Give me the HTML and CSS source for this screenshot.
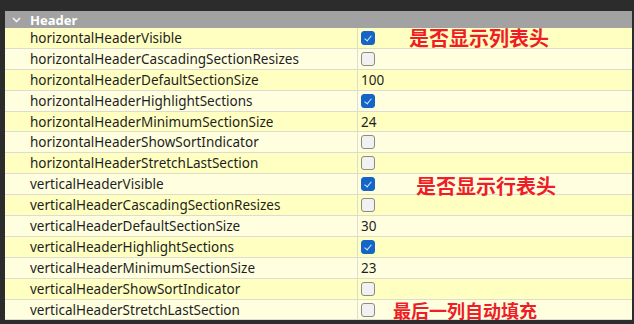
FILE: index.html
```html
<!DOCTYPE html>
<html>
<head>
<meta charset="utf-8">
<link rel="stylesheet" href="styles.css">
</head>
<body>
<div class="frame">
  <div class="editor">
    <div class="group">
      <span class="chev"><svg width="9" height="6" viewBox="0 0 9 6"><path d="M1 1 L4.5 4.5 L8 1" fill="none" stroke="#f2f2f2" stroke-width="1.6"/></svg></span>
      <span class="group-title">Header</span>
    </div>
    <div class="row odd"><div class="name">horizontalHeaderVisible</div><div class="val"><span class="cb on"></span><span class="note n1">是否显示列表头</span></div></div>
    <div class="row"><div class="name">horizontalHeaderCascadingSectionResizes</div><div class="val"><span class="cb"></span></div></div>
    <div class="row odd"><div class="name">horizontalHeaderDefaultSectionSize</div><div class="val">100</div></div>
    <div class="row"><div class="name">horizontalHeaderHighlightSections</div><div class="val"><span class="cb on"></span></div></div>
    <div class="row odd"><div class="name">horizontalHeaderMinimumSectionSize</div><div class="val">24</div></div>
    <div class="row"><div class="name">horizontalHeaderShowSortIndicator</div><div class="val"><span class="cb"></span></div></div>
    <div class="row odd"><div class="name">horizontalHeaderStretchLastSection</div><div class="val"><span class="cb"></span></div></div>
    <div class="row"><div class="name">verticalHeaderVisible</div><div class="val"><span class="cb on"></span><span class="note n2">是否显示行表头</span></div></div>
    <div class="row odd"><div class="name">verticalHeaderCascadingSectionResizes</div><div class="val"><span class="cb"></span></div></div>
    <div class="row"><div class="name">verticalHeaderDefaultSectionSize</div><div class="val">30</div></div>
    <div class="row odd"><div class="name">verticalHeaderHighlightSections</div><div class="val"><span class="cb on"></span></div></div>
    <div class="row"><div class="name">verticalHeaderMinimumSectionSize</div><div class="val">23</div></div>
    <div class="row odd"><div class="name">verticalHeaderShowSortIndicator</div><div class="val"><span class="cb"></span></div></div>
    <div class="row"><div class="name">verticalHeaderStretchLastSection</div><div class="val"><span class="cb"></span><span class="note n3">最后一列自动填充</span></div></div>
  </div>
</div>
</body>
</html>
```
FILE: styles.css
```css
html, body {
  margin: 0;
  padding: 0;
  background: #2c2c2c;
  width: 634px;
  height: 324px;
  overflow: hidden;
}
.frame {
  padding: 11px 2px 0 5px;
}
.editor {
  background: #fffff0;
  font-family: "Noto Sans", "Noto Sans CJK SC", sans-serif;
  font-size: 13.5px;
  color: #1e1e1e;
}
.group {
  height: 17px;
  background: #a2a2a2;
  display: flex;
  align-items: center;
}
.chev {
  width: 25px;
  display: flex;
  justify-content: center;
  padding-right: 2px;
  box-sizing: border-box;
}
.chev svg { display: block; }
.group-title {
  color: #ffffff;
  font-weight: bold;
  font-size: 13px;
}
.row {
  height: 20.9px;
  box-sizing: border-box;
  display: flex;
  background: #ffffe0;
  border-bottom: 1px solid #dedbd0;
}
.row.odd { background: #ffffc2; }
.name {
  width: 353px;
  box-sizing: border-box;
  padding-left: 25px;
  border-right: 1px solid #dedbd0;
  display: flex;
  align-items: center;
  white-space: nowrap;
}
.val {
  flex: 1;
  padding-left: 3px;
  display: flex;
  align-items: center;
  white-space: nowrap;
}
.cb {
  width: 12px;
  height: 12px;
  border: 1px solid #8a8a8a;
  border-radius: 3px;
  background: #f1f1f1;
  box-sizing: content-box;
  flex: none;
  position: relative;
}
.cb.on {
  background: #1565c8;
  border-color: #1565c8;
}
.cb.on::after {
  content: "";
  position: absolute;
  left: 4px;
  top: 2px;
  width: 3px;
  height: 6px;
  border: solid #d8e6f8;
  border-width: 0 1px 1px 0;
  transform: rotate(40deg);
}
.note {
  font-family: "Noto Sans CJK SC", sans-serif;
  font-weight: bold;
  color: #ee1d27;
  line-height: 1;
}
.n1 { font-size: 20px; margin-left: 34px; }
.n2 { font-size: 20px; margin-left: 41px; margin-top: 4px; }
.n3 { font-size: 18px; margin-left: 18px; margin-top: 1px; }
```
